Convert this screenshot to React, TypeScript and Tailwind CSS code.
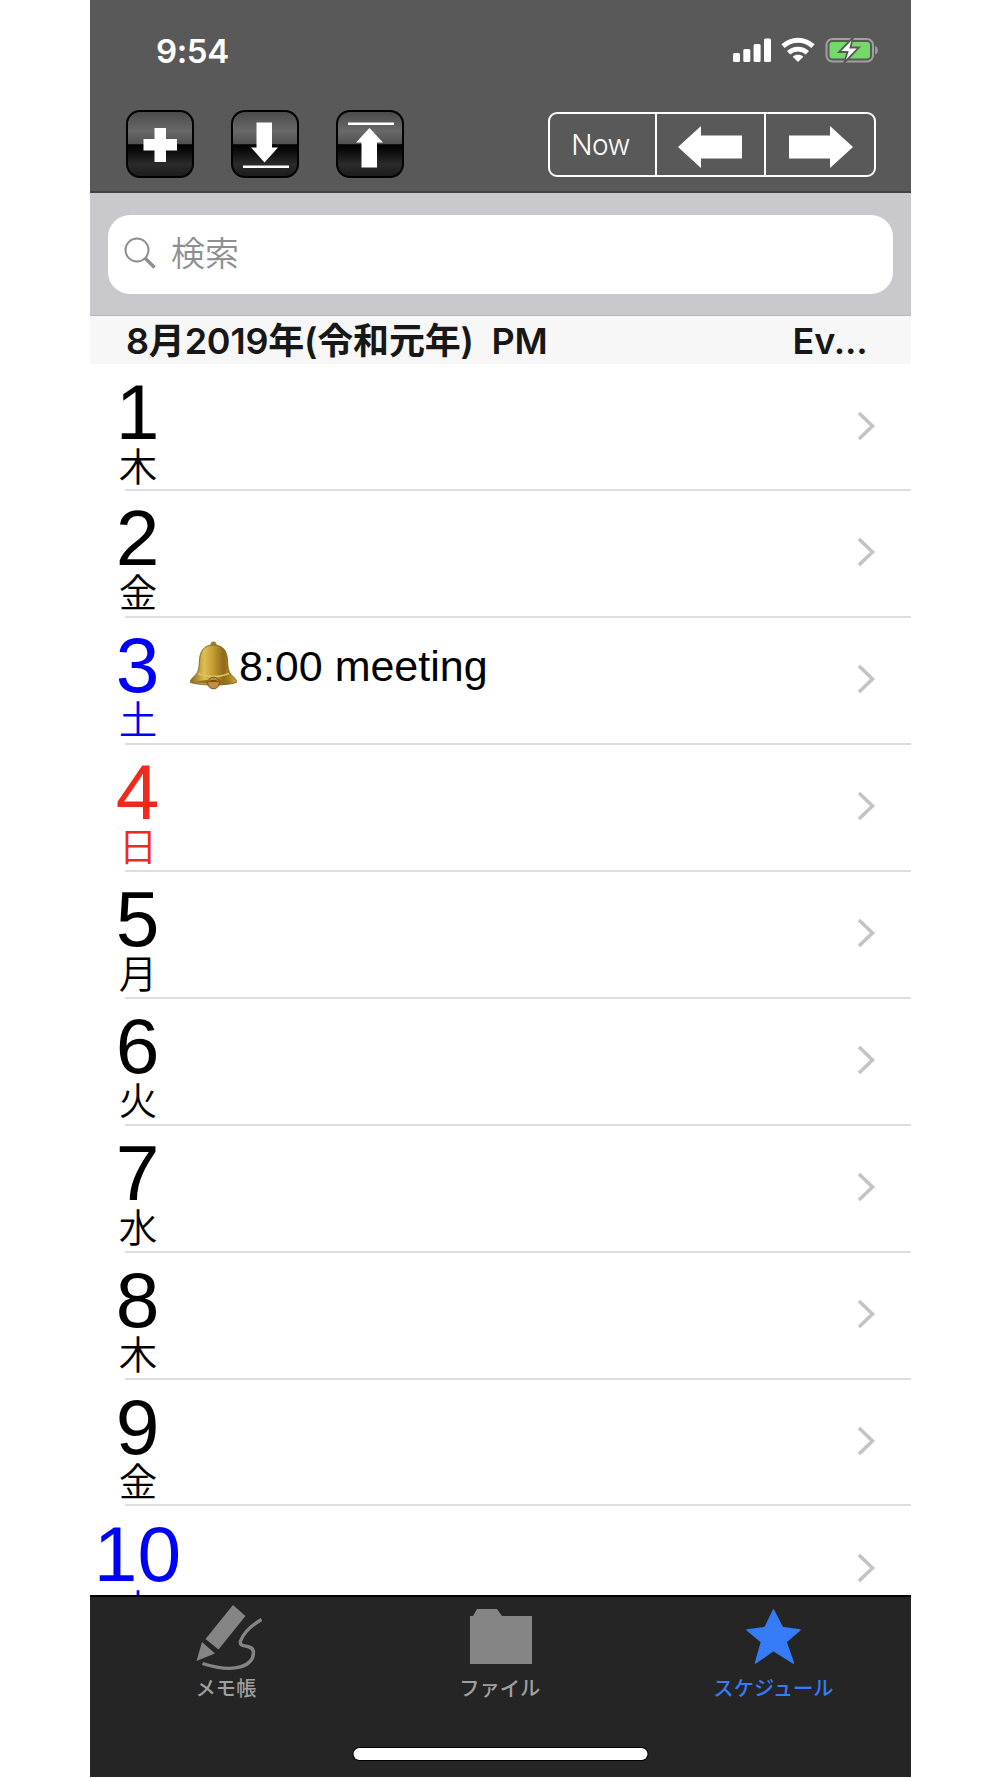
import type { ReactNode } from 'react'

type Day = { date: number; weekday: string; color: string; event?: string }

const days: Day[] = [
  { date: 1, weekday: '木', color: 'text-black' },
  { date: 2, weekday: '金', color: 'text-black' },
  { date: 3, weekday: '土', color: 'text-[#0000fa]', event: '8:00 meeting' },
  { date: 4, weekday: '日', color: 'text-[#ee2a1c]' },
  { date: 5, weekday: '月', color: 'text-black' },
  { date: 6, weekday: '火', color: 'text-black' },
  { date: 7, weekday: '水', color: 'text-black' },
  { date: 8, weekday: '木', color: 'text-black' },
  { date: 9, weekday: '金', color: 'text-black' },
  { date: 10, weekday: '土', color: 'text-[#0000fa]' },
]

function StatusIcons() {
  return (
    <svg width="148" height="28" viewBox="0 0 148 28" fill="none">
      <g fill="#fff">
        <rect x="1" y="16" width="7" height="9" rx="1.5" />
        <rect x="11.3" y="12" width="7" height="13" rx="1.5" />
        <rect x="21.6" y="7" width="7" height="18" rx="1.5" />
        <rect x="32" y="1.5" width="7" height="23.5" rx="1.5" />
      </g>
      <path d="M51 9.2c8.8-8 21.2-8 30 0" stroke="#fff" strokeWidth="5" />
      <path d="M56.6 15.8c5.5-5 13.3-5 18.8 0" stroke="#fff" strokeWidth="4.8" />
      <path d="M66 25l-5.3-5.2c3-2.6 7.6-2.6 10.6 0z" fill="#fff" />
      <rect x="94.5" y="2" width="46.5" height="22.5" rx="6" stroke="#a0a0a0" strokeWidth="2" />
      <rect x="97.5" y="5" width="40.5" height="16.6" rx="3" fill="#75d86b" />
      <path d="M143.2 9c3.4 1 3.4 7.5 0 8.5z" fill="#a0a0a0" />
      <path d="M121 .5L107 15h8.500l-3.500 11L127 10.500h-8.500z" fill="#fff" stroke="#595959" strokeWidth="1.8" />
    </svg>
  )
}

function GlossyButton({ children }: { children: ReactNode }) {
  return (
    <button className="size-[68px] rounded-[14px] border-2 border-black bg-[linear-gradient(#4b4b4b_0%,#696969_30%,#505050_50%,#000_51%,#080808_58%,#2b2b2b_82%,#1c1c1c_100%)]">
      <svg width="64" height="64" viewBox="0 0 64 64" fill="#fff">{children}</svg>
    </button>
  )
}

function Bell() {
  return (
    <svg width="50" height="50" viewBox="0 0 50 50">
      <defs>
        <linearGradient id="brass">
          <stop offset="0" stopColor="#8a691a" />
          <stop offset=".3" stopColor="#dfbe55" />
          <stop offset=".5" stopColor="#c19a30" />
          <stop offset=".72" stopColor="#8f6a18" />
          <stop offset="1" stopColor="#caa53a" />
        </linearGradient>
      </defs>
      <circle cx="24.500" cy="4.500" r="3" fill="#a5822c" />
      <path d="M24.500 5C14 5 11 12 10.500 20C10 30 9 33 5 36.500C2 39 1 41 1.500 42.500C14 46 36 46 47.500 42.500C48 41 47 39 44 36.500C40 33 39 30 38.500 20C38 12 35 5 24.500 5Z" fill="url(#brass)" stroke="#76570f" strokeWidth=".8" />
      <path d="M9 33.500c9 4 22 4 31 0" fill="none" stroke="#e2c25e" strokeWidth="1.8" />
      <path d="M6 42c12-3 25-3 37 0c-12 2.500-25 2.500-37 0z" fill="#94711f" />
      <circle cx="24.500" cy="43" r="5.800" fill="#c48d42" stroke="#77500f" />
      <path d="M19.500 42c2-3 8-3 10 0z" fill="#77500f" />
    </svg>
  )
}

function DayRow({ day }: { day: Day }) {
  return (
    <li className="flex h-[126.95px] shrink-0 items-start">
      <div className={`w-[95px] shrink-0 text-center ${day.color}`}>
        <div className="mt-[16px] text-[78.5px] leading-[64px]">{day.date}</div>
        <div className="pt-[1px] pl-[1px] font-['Noto_Sans_CJK_JP',sans-serif] text-[38.5px] leading-[38px] font-[350]">{day.weekday}</div>
      </div>
      <div className="relative flex h-full flex-1 items-start">
        {day.event && (
          <div className="flex pt-[23px] pl-[4px]">
            <Bell />
            <span className="text-[43px] leading-[52px]">{day.event}</span>
          </div>
        )}
        <svg className="mt-[46px] mr-[34.5px] ml-auto" width="19" height="32" viewBox="0 0 19 32" fill="none" stroke="#c4c4c8" strokeWidth="3.6">
          <path d="M2 3l13.500 13L2 29" />
        </svg>
        {/* the separator runs a little under the date column */}
        <div className="absolute right-0 -bottom-[0.5px] -left-[60px] h-[2px] bg-[#dededf]" />
      </div>
    </li>
  )
}

function Tab({ label, color, children }: { label: string; color: string; children: ReactNode }) {
  return (
    <button className={`flex w-[200px] flex-col items-center ${color}`}>
      <svg width="72" height="70" viewBox="0 0 72 70">{children}</svg>
      <span className="-mt-[1px] font-['Noto_Sans_CJK_JP',sans-serif] text-[20.3px] leading-[28px] font-medium whitespace-nowrap">{label}</span>
    </button>
  )
}

export default function App() {
  return (
    <div className="h-[1778px] bg-white pl-[90px] font-['Liberation_Sans',sans-serif]">
      <div className="flex h-[1777px] w-[820.5px] flex-col overflow-hidden">
        <header className="h-[193px] shrink-0 border-b-2 border-[#424242] bg-[#595959] text-white">
          <div className="flex h-[110px] items-start justify-between pt-[37px] pr-[31px] pl-[66px]">
            <span className="font-['Inter',sans-serif] text-[33px] leading-[28px] font-semibold tracking-[-0.4px]">9:54</span>
            <StatusIcons />
          </div>
          <div className="flex pr-[35px] pl-[36px]">
            <div className="flex gap-[37px]">
              <GlossyButton>
                <path d="M26.500 16h11.500v11h11v11.500h-11v11.500h-11.500v-11.500h-11v-11.500h11z" />
              </GlossyButton>
              <GlossyButton>
                <path d="M23.500 10.500h15.500v25h6L31.500 50.500L18 35.500h5.500zM10 53.500h46v2.500h-46z" />
              </GlossyButton>
              <GlossyButton>
                <path d="M23.500 55.500h15.500v-25h6L31.500 16L18 30.500h5.500zM10 10.500h46v2.500h-46z" />
              </GlossyButton>
            </div>
            <div className="mt-[2px] ml-auto flex h-[65px] w-[328px] divide-x-2 divide-white rounded-[9px] border-2 border-white">
              <button className="w-[107px] pr-[3px] font-['Inter',sans-serif] text-[28px] font-light tracking-[-0.5px]">Now</button>
              <button className="flex w-[109px] items-center justify-center pt-[5px]">
                <svg width="64" height="42" viewBox="0 0 64 42" fill="#fff">
                  <path d="M0 21L23 0v9.500h41v23H23V42z" />
                </svg>
              </button>
              <button className="flex flex-1 items-center justify-center pt-[5px] pl-[2px]">
                <svg width="64" height="42" viewBox="0 0 64 42" fill="#fff">
                  <path d="M64 21L41 0v9.500H0v23h41V42z" />
                </svg>
              </button>
            </div>
          </div>
        </header>

        <div className="h-[122.5px] shrink-0 border-b border-[#b8b7bc] bg-[#c9c8cd] px-[18px] pt-[21.5px]">
          <div className="flex h-[79px] items-center rounded-[22px] bg-white pl-[16px] text-[#8e8e93]">
            <svg className="mb-[1px]" width="33" height="33" viewBox="0 0 33 33" fill="none" stroke="currentColor">
              <circle cx="13" cy="13" r="11.500" strokeWidth="2" />
              <path d="M21 21l9.500 9.500" strokeWidth="3.4" />
            </svg>
            <span className="mb-[5px] ml-[14px] font-['Noto_Sans_CJK_JP',sans-serif] text-[34px] leading-[40px] font-[350]">検索</span>
          </div>
        </div>

        <div className="flex h-[48px] shrink-0 items-center justify-between bg-[#f7f7f7] pt-[3px] pr-[43px] pl-[36px] font-['Inter','Noto_Sans_CJK_JP',sans-serif] text-[36px] leading-[44px] font-semibold tracking-[-0.2px] text-[#171717]">
          <span className="whitespace-pre">8月2019年(令和元年)  PM</span>
          <span>Ev...</span>
        </div>

        <ul className="flex min-h-0 flex-1 flex-col overflow-hidden">
          {days.map((day) => (
            <DayRow key={day.date} day={day} />
          ))}
        </ul>

        <nav className="flex h-[182px] shrink-0 flex-col border-t-2 border-black bg-[#252525]">
          <div className="flex h-[144px] justify-between pt-[7px] pr-[37px] pl-[36px]">
            <Tab label="メモ帳" color="text-[#a0a0a0]">
              <g transform="translate(4.5 1)" fill="#858585">
                <path d="M38.500 0L51 11L24 44.500L11 34z" />
                <path d="M7.500 37L20.500 48.500L2 56z" />
                <path d="M67 14.500C56 21 49 28 46 36C44 44 58 38 59 47C59 61 41 69 8 58.500" fill="none" stroke="#858585" strokeWidth="3.4" />
              </g>
            </Tab>
            <Tab label="ファイル" color="text-[#a0a0a0]">
              <path d="M6 12h3l4-7h20l5 7h30v48H6z" fill="#858585" />
            </Tab>
            <Tab label="スケジュール" color="text-[#367bf7]">
              <path d="M35.500 6L44.500 23.500L62 26L48 38L55.500 59L35.500 46.500L17.500 59L23.500 38L9 26L27 23.500z" fill="currentColor" stroke="currentColor" strokeWidth="1.5" strokeLinejoin="round" />
            </Tab>
          </div>
          <div className="mx-auto mt-[7px] h-[12px] w-[294px] translate-x-[0.5px] rounded-full bg-white ring-1 ring-black" />
        </nav>
      </div>
    </div>
  )
}
